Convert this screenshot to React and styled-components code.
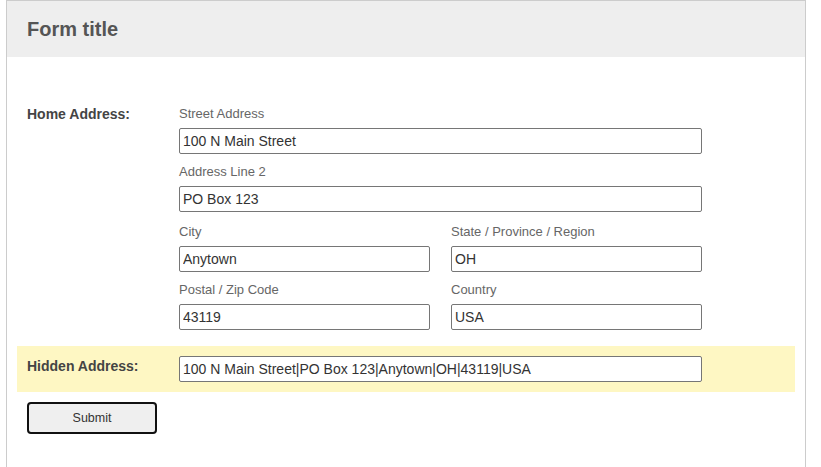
import styled, { createGlobalStyle } from 'styled-components';

const GlobalStyle = createGlobalStyle`
  body {
    margin: 0;
    background: #fff;
    font-family: "Liberation Sans", Arial, sans-serif;
  }
`;

const Page = styled.div`
  padding: 0 15px 0 6px;
`;

const Card = styled.form`
  border: 1px solid #ccc;
  border-bottom: none;
  min-height: 480px;
  background: #fff;
`;

const Header = styled.div`
  background: #eee;
  height: 56px;
  display: flex;
  align-items: center;
  padding: 0 20px;
  h1 {
    margin: 0;
    font-size: 20px;
    font-weight: bold;
    color: #555;
  }
`;

const Body = styled.div`
  padding: 49px 10px 0;
  display: flex;
  flex-direction: column;
`;

const Row = styled.div`
  display: flex;
  align-items: flex-start;
  padding: ${(p) => (p.$highlight ? '10px 10px' : '0 10px')};
  background: ${(p) => (p.$highlight ? '#fef7c3' : 'transparent')};
  margin-top: ${(p) => (p.$highlight ? '16px' : '0')};
`;

const RowLabel = styled.label`
  width: 152px;
  flex-shrink: 0;
  font-size: 14px;
  font-weight: bold;
  color: #444;
  line-height: 16px;
  padding-top: ${(p) => p.$top || 0}px;
`;

const Fields = styled.div`
  width: 523px;
  display: flex;
  flex-direction: column;
  gap: 10px;
`;

const Pair = styled.div`
  display: grid;
  grid-template-columns: 1fr 1fr;
  column-gap: 21px;
  row-gap: 10px;
  margin-top: ${(p) => p.$gap || 0}px;
`;

const Field = styled.div`
  display: flex;
  flex-direction: column;
  gap: 6px;
  span {
    font-size: 13px;
    line-height: 16px;
    color: #666;
  }
`;

const Input = styled.input`
  box-sizing: border-box;
  width: 100%;
  height: 26px;
  border: 1px solid #767676;
  border-radius: 2px;
  padding: 0 3px;
  font-family: "Liberation Sans", Arial, sans-serif;
  font-size: 14px;
  color: #333;
  background: #fff;
  outline: none;
`;

const Actions = styled.div`
  padding: 10px 10px;
`;

const SubmitButton = styled.button`
  width: 130px;
  height: 32px;
  border: 2px solid #111;
  border-radius: 4px;
  background: #efefef;
  font-family: "Liberation Sans", Arial, sans-serif;
  font-size: 12.5px;
  color: #333;
  cursor: pointer;
`;

const TextField = ({ label, value }) => (
  <Field>
    <span>{label}</span>
    <Input defaultValue={value} />
  </Field>
);

export default function App() {
  return (
    <>
      <GlobalStyle />
      <Page>
        <Card onSubmit={(e) => e.preventDefault()}>
          <Header>
            <h1>Form title</h1>
          </Header>
          <Body>
            <Row>
              <RowLabel $top={-2}>Home Address:</RowLabel>
              <Fields>
                <TextField label="Street Address" value="100 N Main Street" />
                <TextField label="Address Line 2" value="PO Box 123" />
                <Pair $gap={2}>
                  <TextField label="City" value="Anytown" />
                  <TextField label="State / Province / Region" value="OH" />
                  <TextField label="Postal / Zip Code" value="43119" />
                  <TextField label="Country" value="USA" />
                </Pair>
              </Fields>
            </Row>
            <Row $highlight>
              <RowLabel $top={2}>Hidden Address:</RowLabel>
              <Fields>
                <Input defaultValue="100 N Main Street|PO Box 123|Anytown|OH|43119|USA" />
              </Fields>
            </Row>
            <Actions>
              <SubmitButton type="submit">Submit</SubmitButton>
            </Actions>
          </Body>
        </Card>
      </Page>
    </>
  );
}
